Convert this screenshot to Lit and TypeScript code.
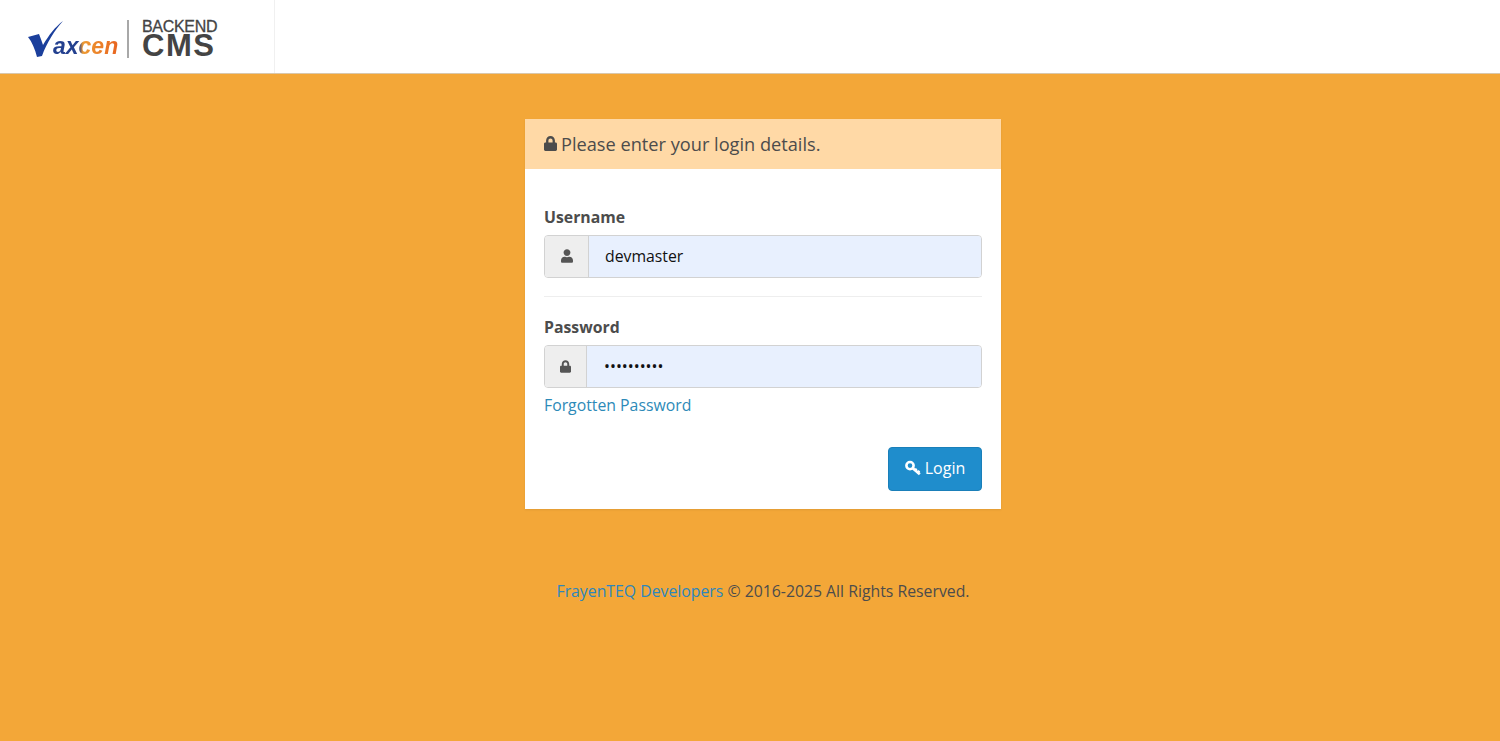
import { LitElement, html, css, svg } from "lit";
import { customElement } from "lit/decorators.js";

const lockIcon = (w: number, h: number) => html`<svg width=${w} height=${h} viewBox="0 0 448 512" aria-hidden="true"><path fill="currentColor" d="M400 224h-24v-72C376 68.2 307.8 0 224 0S72 68.2 72 152v72H48c-26.5 0-48 21.5-48 48v192c0 26.5 21.5 48 48 48h352c26.5 0 48-21.5 48-48V272c0-26.5-21.5-48-48-48zm-104 0H152v-72c0-39.7 32.3-72 72-72s72 32.3 72 72v72z"/></svg>`;

const userIcon = html`<svg width="12" height="14" viewBox="0 0 448 512" aria-hidden="true"><path fill="currentColor" d="M224 256c70.7 0 128-57.3 128-128S294.7 0 224 0 96 57.3 96 128s57.3 128 128 128zm89.6 32h-16.7c-22.2 10.2-46.9 16-72.9 16s-50.6-5.8-72.9-16h-16.7C60.2 288 0 348.2 0 422.4V464c0 26.5 21.5 48 48 48h352c26.5 0 48-21.5 48-48v-41.6c0-74.2-60.2-134.4-134.4-134.4z"/></svg>`;

const keyIcon = html`<svg width="16" height="16" viewBox="0 0 16 16" aria-hidden="true"><g fill="none" stroke="currentColor"><circle cx="5" cy="5.6" r="3.6" stroke-width="2.6"/><path stroke-width="2.8" d="M7.8 8.2l7 6"/><path stroke-width="2.2" d="M11.6 8.6l-2 2.4M14.4 10.8l-2 2.4"/></g></svg>`;

const logoMark = svg`<path fill="#1b3f9c" d="M0 17 11 14C13 19 14 22 15 25 21 15 27 7 35 1 27 10 19 22 14 36L9 37C7 29 4 22 0 17Z"/>`;

@customElement("app-root")
export class AppRoot extends LitElement {
  static styles = css`
    :host {
      display: block;
      height: 741px;
      overflow: hidden;
      background: #f3a738;
      font-family: "Open Sans", "Noto Sans", sans-serif;
      color: #4c4c4c;
    }
    .top {
      height: 73px;
      background: #fff;
      border-bottom: 1px solid #d9c7ab;
      display: flex;
    }
    .brand {
      width: 275px;
      box-sizing: border-box;
      border-right: 1px solid #f0f0f0;
      display: flex;
      align-items: center;
      padding: 5px 0 0 28px;
    }
    .vax { display: flex; align-items: flex-end; height: 38px; width: 90px; }
    .vax svg { flex: none; margin-right: -10px; }
    .word {
      font-family: "Liberation Sans", Arial, sans-serif;
      font-style: italic;
      font-weight: 700;
      font-size: 23px;
      line-height: 24px;
      background: linear-gradient(90deg, #23408f 0%, #23408f 40%, #ee9a32 46%, #e8641f 100%);
      -webkit-background-clip: text;
      background-clip: text;
      color: transparent;
    }
    .sep { width: 2px; height: 38px; background: #a8a8a8; margin: -1px 13px 0 9px; }
    .cms {
      font-family: "Liberation Sans", Arial, sans-serif;
      color: #444;
      display: flex;
      flex-direction: column;
    }
    .cms small { font-size: 16px; line-height: 14px; letter-spacing: -0.3px; -webkit-text-stroke: 0.3px #444; }
    .cms b { font-size: 31px; line-height: 24px; letter-spacing: 1.5px; }
    main {
      display: flex;
      flex-direction: column;
      align-items: center;
      padding: 45px 0 0 26px;
    }
    .card { width: 476px; background: #fff; box-shadow: 0 1px 2px rgba(0,0,0,.08); }
    .head {
      height: 50px;
      padding: 0 19px 1px;
      box-sizing: border-box;
      background: #ffd9a6;
      display: flex;
      align-items: center;
      gap: 4px;
      font-size: 18.2px;
    }
    .body { padding: 36px 19px 18px; }
    label {
      display: block;
      font-weight: 700;
      font-size: 15.8px;
      line-height: 24px;
      margin-bottom: 6px;
    }
    .group {
      display: flex;
      height: 43px;
      box-sizing: border-box;
      border: 1px solid #d2d2d2;
      border-radius: 4px;
      overflow: hidden;
      box-shadow: inset 0 1px 1px rgba(0,0,0,.08);
    }
    .addon {
      width: 44px;
      padding-bottom: 1px;
      box-sizing: border-box;
      background: #eee;
      border-right: 1px solid #d2d2d2;
      display: flex;
      align-items: center;
      justify-content: center;
      color: #555;
      flex: none;
    }
    .addon.pw { width: 42px; }
    .field {
      flex: 1;
      background: #e8f0fe;
      display: flex;
      align-items: center;
      padding: 0 16px 2px;
      font-size: 15.8px;
      color: #111;
    }
    .pw + .field { padding-left: 17px; }
    hr { border: 0; border-top: 1px solid #eee; margin: 18px 0 18px; }
    .forgot {
      display: block;
      margin-top: 4px;
      font-size: 15.8px;
      line-height: 26px;
      color: #2d8ab8;
      text-decoration: none;
    }
    .actions { display: flex; justify-content: flex-end; margin-top: 29px; }
    .btn {
      height: 44px;
      width: 94px;
      box-sizing: border-box;
      display: flex;
      align-items: center;
      justify-content: center;
      gap: 4px;
      background: #1f8dcc;
      border: 1px solid #1a7fb9;
      border-radius: 4px;
      color: #fff;
      font: inherit;
      font-size: 16px;
      padding: 0 0 2px;
    }
    footer { margin-top: 69px; font-size: 15.8px; line-height: 26px; color: #4c4c4c; }
    footer a { color: #2d86bd; text-decoration: none; }
  `;

  render() {
    return html`
      <div class="top">
        <div class="brand">
          <div class="vax">
            <svg width="35" height="38" viewBox="0 0 35 38">${logoMark}</svg>
            <span class="word">axcen</span>
          </div>
          <div class="sep"></div>
          <div class="cms"><small>BACKEND</small><b>CMS</b></div>
        </div>
      </div>
      <main>
        <div class="card">
          <div class="head">${lockIcon(13, 15)}<span>Please enter your login details.</span></div>
          <div class="body">
            <label>Username</label>
            <div class="group"><div class="addon">${userIcon}</div><div class="field">devmaster</div></div>
            <hr />
            <label>Password</label>
            <div class="group"><div class="addon pw">${lockIcon(11, 13)}</div><div class="field">••••••••••</div></div>
            <a class="forgot" href="#">Forgotten Password</a>
            <div class="actions"><button class="btn">${keyIcon}<span>Login</span></button></div>
          </div>
        </div>
        <footer><a href="#">FrayenTEQ Developers</a> © 2016-2025 All Rights Reserved.</footer>
      </main>
    `;
  }
}
